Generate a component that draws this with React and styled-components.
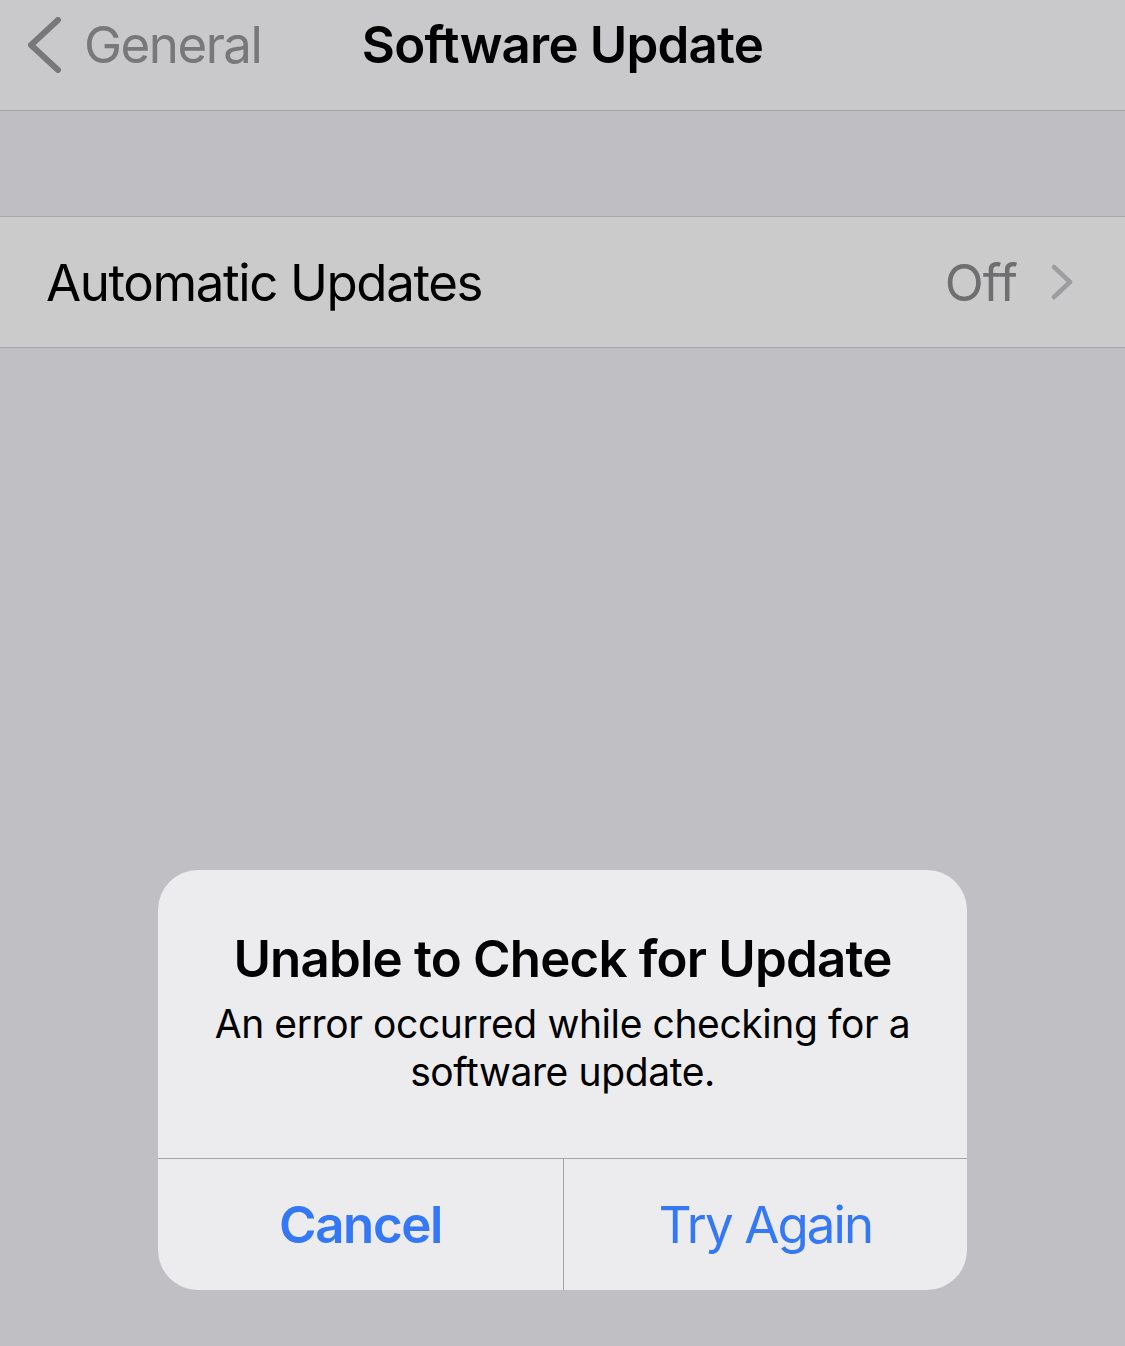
import styled, { createGlobalStyle } from 'styled-components'

const GlobalStyle = createGlobalStyle`
  html, body {
    margin: 0;
    padding: 0;
    background: #bfbfc4;
    font-family: Inter, "Noto Sans", sans-serif;
    -webkit-font-smoothing: antialiased;
  }
`

const Page = styled.div`
  position: relative;
  width: 1125px;
  height: 1346px;
  background: #bfbfc4;
  overflow: hidden;
`

const NavBar = styled.div`
  height: 111px;
  box-sizing: border-box;
  background: #c9c9cb;
  border-bottom: 1px solid #a3a3a6;
  display: grid;
  grid-template-columns: 1fr auto 1fr;
  align-items: start;
  padding-top: 14px;
`

const BackButton = styled.div`
  display: flex;
  align-items: center;
  gap: 21px;
  padding-left: 27px;
  color: #78787b;
  font-size: 51px;
  letter-spacing: -1.5px;
  line-height: 62px;
`

const NavTitle = styled.div`
  font-size: 51px;
  font-weight: 600;
  color: #000;
  line-height: 62px;
  letter-spacing: -0.8px;
`

const SectionGap = styled.div`
  height: 105px;
  background: #bebec3;
  border-bottom: 1px solid #a9a9ac;
`

const Row = styled.div`
  height: 130px;
  background: #cbcbcc;
  border-bottom: 1px solid #a9a9ac;
  display: flex;
  align-items: center;
  padding: 0 52px 0 46px;
`

const RowLabel = styled.div`
  flex: 1;
  font-size: 51px;
  color: #000;
  letter-spacing: -1.4px;
`

const RowValue = styled.div`
  font-size: 51px;
  color: #6f6f72;
  margin-right: 34px;
  letter-spacing: -0.8px;
`

const Overlay = styled.div`
  position: absolute;
  inset: 0;
  display: flex;
  justify-content: center;
  align-items: flex-start;
  padding-top: 870px;
`

const Alert = styled.div`
  width: 809px;
  background: #ececee;
  border-radius: 40px;
  overflow: hidden;
`

const AlertBody = styled.div`
  height: 288px;
  box-sizing: border-box;
  padding: 58px 40px 0;
  text-align: center;
`

const AlertTitle = styled.div`
  font-size: 51px;
  font-weight: 600;
  color: #000;
  line-height: 62px;
  letter-spacing: -0.8px;
`

const AlertMessage = styled.div`
  margin-top: 10px;
  font-size: 39px;
  color: #000;
  line-height: 48px;
  letter-spacing: -0.4px;
`

const Actions = styled.div`
  display: grid;
  grid-template-columns: 405px 1fr;
  border-top: 1px solid #a5a5a8;
  height: 131px;
`

const Action = styled.div`
  display: flex;
  align-items: center;
  justify-content: center;
  font-size: 51px;
  color: #3478f6;
  font-weight: ${p => (p.$bold ? 600 : 400)};
  letter-spacing: ${p => (p.$bold ? '-1.4px' : '-1.9px')};
  border-left: ${p => (p.$divider ? '1px solid #a5a5a8' : 'none')};
`

function BackChevron() {
  return (
    <svg width="36" height="56" viewBox="0 0 36 56">
      <path d="M31 3 L4 28 L31 53" fill="none" stroke="#78787b" strokeWidth="6" strokeLinecap="round" strokeLinejoin="round" />
    </svg>
  )
}

function RowChevron() {
  return (
    <svg width="22" height="36" viewBox="0 0 22 36">
      <path d="M3 3 L19 18 L3 33" fill="none" stroke="#9d9da1" strokeWidth="4.5" strokeLinecap="round" strokeLinejoin="round" />
    </svg>
  )
}

export default function App() {
  return (
    <>
      <GlobalStyle />
      <Page>
        <NavBar>
          <BackButton>
            <BackChevron />
            <span>General</span>
          </BackButton>
          <NavTitle>Software Update</NavTitle>
          <div />
        </NavBar>
        <SectionGap />
        <Row>
          <RowLabel>Automatic Updates</RowLabel>
          <RowValue>Off</RowValue>
          <RowChevron />
        </Row>
        <Overlay>
          <Alert>
            <AlertBody>
              <AlertTitle>Unable to Check for Update</AlertTitle>
              <AlertMessage>
                An error occurred while checking for a
                <br />
                software update.
              </AlertMessage>
            </AlertBody>
            <Actions>
              <Action $bold>Cancel</Action>
              <Action $divider>Try Again</Action>
            </Actions>
          </Alert>
        </Overlay>
      </Page>
    </>
  )
}
